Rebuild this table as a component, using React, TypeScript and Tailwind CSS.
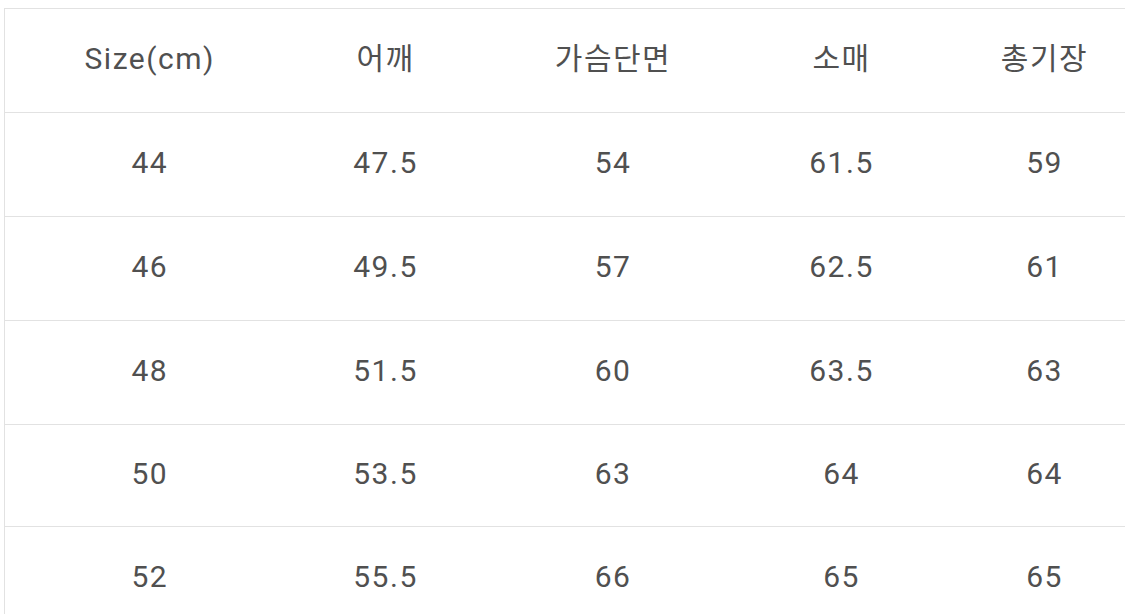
const headers = ['Size(cm)', '어깨', '가슴단면', '소매', '총기장'];

const rows = [
  ['44', '47.5', '54', '61.5', '59'],
  ['46', '49.5', '57', '62.5', '61'],
  ['48', '51.5', '60', '63.5', '63'],
  ['50', '53.5', '63', '64', '64'],
  ['52', '55.5', '66', '65', '65'],
];

const widths = ['w-[288px]', 'w-[184px]', 'w-[271px]', 'w-[186px]', 'w-[220px]'];

export default function App() {
  return (
    <div className="w-[1125px] h-[614px] overflow-hidden bg-white pt-2 pl-1">
      <table
        className="table-fixed border-collapse w-[1149px] text-[30px] tracking-[1.5px] text-[#505050]"
        style={{ fontFamily: 'Roboto, "Noto Sans CJK KR", sans-serif' }}
      >
        <colgroup>
          {widths.map((w, i) => (
            <col key={i} className={w} />
          ))}
        </colgroup>
        <thead>
          <tr className="h-[104px]">
            {headers.map((h, i) => (
              <th
                key={h}
                className={`font-normal text-center pb-1 pl-[2px] border-t border-b border-[#e2e2e2] ${
                  i === 0 ? 'border-l' : ''
                }`}
              >
                {h}
              </th>
            ))}
          </tr>
        </thead>
        <tbody>
          {rows.map((row, r) => (
            <tr key={row[0]} className={r === 3 ? 'h-[102px]' : 'h-[104px]'}>
              {row.map((cell, i) => (
                <td
                  key={i}
                  className={`text-center pb-1 pl-[2px] border-b border-[#e2e2e2] ${i === 0 ? 'border-l' : ''}`}
                >
                  {cell}
                </td>
              ))}
            </tr>
          ))}
        </tbody>
      </table>
    </div>
  );
}
